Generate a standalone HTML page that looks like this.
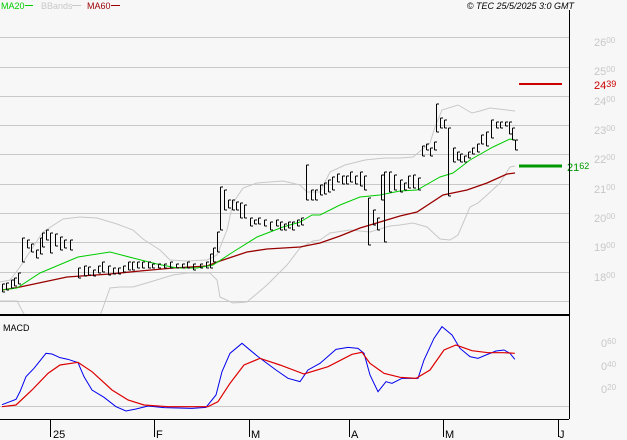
<!DOCTYPE html>
<html><head><meta charset="utf-8"><style>
html,body{margin:0;padding:0;background:#f7f7f7;}
svg{display:block;font-family:"Liberation Sans",sans-serif;}
</style></head><body>
<svg width="627" height="440" viewBox="0 0 627 440" xmlns="http://www.w3.org/2000/svg">
<defs>
<marker id="tk" markerUnits="userSpaceOnUse" markerWidth="4" markerHeight="2" refX="0" refY="1" orient="0" viewBox="0 0 4 2" overflow="visible">
<line x1="0" y1="1" x2="2.5" y2="1" stroke="#000" stroke-width="1"/>
</marker>
</defs>
<rect width="627" height="440" fill="#f7f7f7"/>
<g stroke="#c8c8c8" stroke-width="1">
<line x1="0" y1="37.5" x2="569" y2="37.5"/>
<line x1="0" y1="67.5" x2="569" y2="67.5"/>
<line x1="0" y1="96.5" x2="569" y2="96.5"/>
<line x1="0" y1="125.5" x2="569" y2="125.5"/>
<line x1="0" y1="154.5" x2="569" y2="154.5"/>
<line x1="0" y1="184.5" x2="569" y2="184.5"/>
<line x1="0" y1="213.5" x2="569" y2="213.5"/>
<line x1="0" y1="242.5" x2="569" y2="242.5"/>
<line x1="0" y1="272.5" x2="569" y2="272.5"/>
<line x1="0" y1="301.5" x2="569" y2="301.5"/>
<line x1="0" y1="406.5" x2="569" y2="406.5"/>
</g>
<g fill="#c8c8c8" font-size="11">
<text x="594" y="46">26<tspan font-size="8" dy="-3">00</tspan></text>
<text x="594" y="75">25<tspan font-size="8" dy="-3">00</tspan></text>
<text x="594" y="105">24<tspan font-size="8" dy="-3">00</tspan></text>
<text x="594" y="134">23<tspan font-size="8" dy="-3">00</tspan></text>
<text x="594" y="163">22<tspan font-size="8" dy="-3">00</tspan></text>
<text x="594" y="193">21<tspan font-size="8" dy="-3">00</tspan></text>
<text x="594" y="222">20<tspan font-size="8" dy="-3">00</tspan></text>
<text x="594" y="251">19<tspan font-size="8" dy="-3">00</tspan></text>
<text x="594" y="281">18<tspan font-size="8" dy="-3">00</tspan></text>
<text x="601" y="347">0<tspan font-size="8" dy="-3">60</tspan></text>
<text x="601" y="370">0<tspan font-size="8" dy="-3">40</tspan></text>
<text x="601" y="393">0<tspan font-size="8" dy="-3">20</tspan></text>
</g>
<g fill="none" stroke="#c8c8c8" stroke-width="1">
<polyline points="0,282 10,280 20,267 33,247 43,232 63,219 80,217 97,218 117,224 133,230 143,239 160,250 170,260 187,261 207,260 217,255 227,230 233,203 243,188 257,183 283,181 300,185 307,192 320,192 330,172 345,165 365,160 385,158 400,158 413,157 430,143 435,127 442,110 458,105 472,113 480,111 490,108 507,110 515,111"/>
<polyline points="0,301 17,301 25,316"/>
<polyline points="100,316 110,288 120,287 133,287 150,282 173,275 187,273 210,273 217,280 220,297 233,303 247,302 267,285 287,265 300,248 313,241 320,240 330,233 350,230 370,232 390,226 400,225 413,223 427,227 440,239 450,240 458,235 470,207 478,203 487,195 500,183 510,167 515,166"/>
</g>
<polyline fill="none" stroke="#990000" stroke-width="1.3" points="2,290 20,287 67,277 110,274 140,271 173,268 207,266 220,261 247,252 267,249 300,247 320,243 340,236 360,228 380,222 400,216 417,212 443,195 467,190 487,183 507,174 515,173"/>
<polyline fill="none" stroke="#00cc00" stroke-width="1" points="2,290 17,288 40,273 78,257 110,252 133,258 157,264 177,268 197,268 213,265 233,252 257,237 283,227 300,222 312,215 320,215 340,205 360,197 380,195 400,191 417,190 440,177 453,173 470,160 493,147 510,139 515,140"/>
<path fill="none" stroke="#000" stroke-width="1" marker-start="url(#tk)" marker-mid="url(#tk)" marker-end="url(#tk)" d="
M2.5 284V292M6.5 283V290M11.5 280V288M14.5 278V286M18.5 273V284M22.5 238V262M27.5 240V248M31.5 244V252M36.5 250V258M40.5 238V254M42.5 233V247M46.5 230V240M50.5 233V253M55.5 234V246M60.5 237V250M64.5 240V248M70.5 240V250M78.5 268V278M84.5 266V276M88.5 267V275M93.5 270V276M98.5 266V273M102.5 262V272M108.5 266V275M113.5 268V274M118.5 268V274M123.5 266V272M128.5 262V270M132.5 262V270M137.5 262V268M142.5 262V268M148.5 262V268M152.5 264V268M158.5 264V268M164.5 264V268M170.5 262V268M176.5 264V268M182.5 264V268M187.5 262V268M193.5 264V270M200.5 264V268M206.5 262V268M210.5 254V268M213.5 248V262M217.5 232V252M220.5 187V230M224.5 190V210M228.5 200V208M232.5 200V210M236.5 202V210M240.5 203V218M244.5 205V218M250.5 218V226M254.5 220V224M258.5 218V224M264.5 220V226M270.5 222V230M276.5 220V226M280.5 222V230M284.5 224V230M288.5 222V228M292.5 222V230M297.5 220V226M301.5 218V225M306.5 165V200M311.5 190V200M315.5 190V200M320.5 185V195M324.5 183V194M328.5 180V192M332.5 177V190M337.5 174V182M342.5 176V184M346.5 176V184M350.5 172V182M355.5 176V184M360.5 172V186M364.5 176V190M368.5 198V245M373.5 210V225M377.5 218V230M381.5 175V200M384.5 172V242M389.5 172V192M394.5 175V190M400.5 180V192M404.5 183V190M408.5 176V188M413.5 175V188M418.5 178V190M422.5 146V156M426.5 144V150M430.5 148V156M434.5 142V150M436.5 104V132M440.5 118V128M444.5 120V128M448.5 128V196M453.5 148V162M457.5 152V160M460.5 154V162M464.5 156V162M468.5 152V158M472.5 148V154M477.5 144V152M481.5 135V144M486.5 132V146M491.5 120V138M496.5 122V128M500.5 122V128M505.5 122V126M509.5 122V134M512.5 128V140M515.5 140V150"/>
<line x1="519" y1="84" x2="562" y2="84" stroke="#cc0000" stroke-width="2"/>
<text x="594" y="89" fill="#cc0000" font-size="11">24<tspan font-size="9" dy="-2">39</tspan></text>
<line x1="519" y1="166" x2="562" y2="166" stroke="#009900" stroke-width="3"/>
<text x="567" y="171" fill="#009900" font-size="11">21<tspan font-size="9" dy="-2">62</tspan></text>
<line x1="569.5" y1="10" x2="569.5" y2="419" stroke="#000"/>
<line x1="0" y1="315" x2="569" y2="315" stroke="#000" stroke-width="2"/>
<line x1="0" y1="419.5" x2="569" y2="419.5" stroke="#000"/>
<g stroke="#000">
<line x1="50.5" y1="419" x2="50.5" y2="437"/>
<line x1="154.5" y1="419" x2="154.5" y2="437"/>
<line x1="249.5" y1="419" x2="249.5" y2="437"/>
<line x1="349.5" y1="419" x2="349.5" y2="437"/>
<line x1="443.5" y1="419" x2="443.5" y2="437"/>
<line x1="558.5" y1="419" x2="558.5" y2="437"/>
</g>
<g font-size="11" fill="#000">
<text x="53" y="438">25</text>
<text x="156" y="438">F</text>
<text x="251" y="438">M</text>
<text x="351" y="438">A</text>
<text x="445" y="438">M</text>
<text x="559" y="438">J</text>
</g>
<text x="3" y="331" font-size="9" fill="#000">MACD</text>
<g transform="translate(0,310) scale(0.4,0.33333)">
<polyline fill="none" stroke="#0000ee" stroke-width="1" vector-effect="non-scaling-stroke" points="5,284 40,268 50,245 65,200 85,175 115,130 130,132 150,143 170,148 195,158 210,200 230,240 260,262 290,290 315,303 340,297 370,288 410,293 480,295 515,292 540,255 555,185 575,130 605,100 645,140 690,180 720,205 750,215 770,180 800,160 840,118 870,112 895,115 910,130 925,195 945,245 965,215 980,220 1005,205 1030,205 1045,205 1060,150 1085,85 1105,50 1130,75 1150,115 1175,140 1195,145 1215,135 1240,123 1260,120 1275,130 1287,148"/>
<polyline fill="none" stroke="#dd0000" stroke-width="1.2" vector-effect="non-scaling-stroke" points="5,290 40,285 80,240 120,190 150,165 195,157 230,185 280,240 320,270 360,285 420,290 520,290 545,275 575,220 610,165 650,145 700,165 760,192 820,170 880,133 905,127 925,160 960,190 1000,202 1040,205 1075,180 1110,120 1140,105 1180,122 1220,128 1260,128 1287,130"/>
</g>
<g font-size="9">
<text x="1" y="9" fill="#00cc00">MA20</text>
<line x1="25" y1="5.5" x2="33" y2="5.5" stroke="#00cc00"/>
<text x="41" y="9" fill="#c8c8c8">BBands</text>
<line x1="72" y1="5.5" x2="81" y2="5.5" stroke="#c8c8c8"/>
<text x="87" y="9" fill="#990000">MA60</text>
<line x1="111" y1="5.5" x2="120" y2="5.5" stroke="#990000"/>
<text x="574" y="9" fill="#000" font-style="italic" text-anchor="end">© TEC 25/5/2025 3:0 GMT</text>
</g>
</svg>
</body></html>
